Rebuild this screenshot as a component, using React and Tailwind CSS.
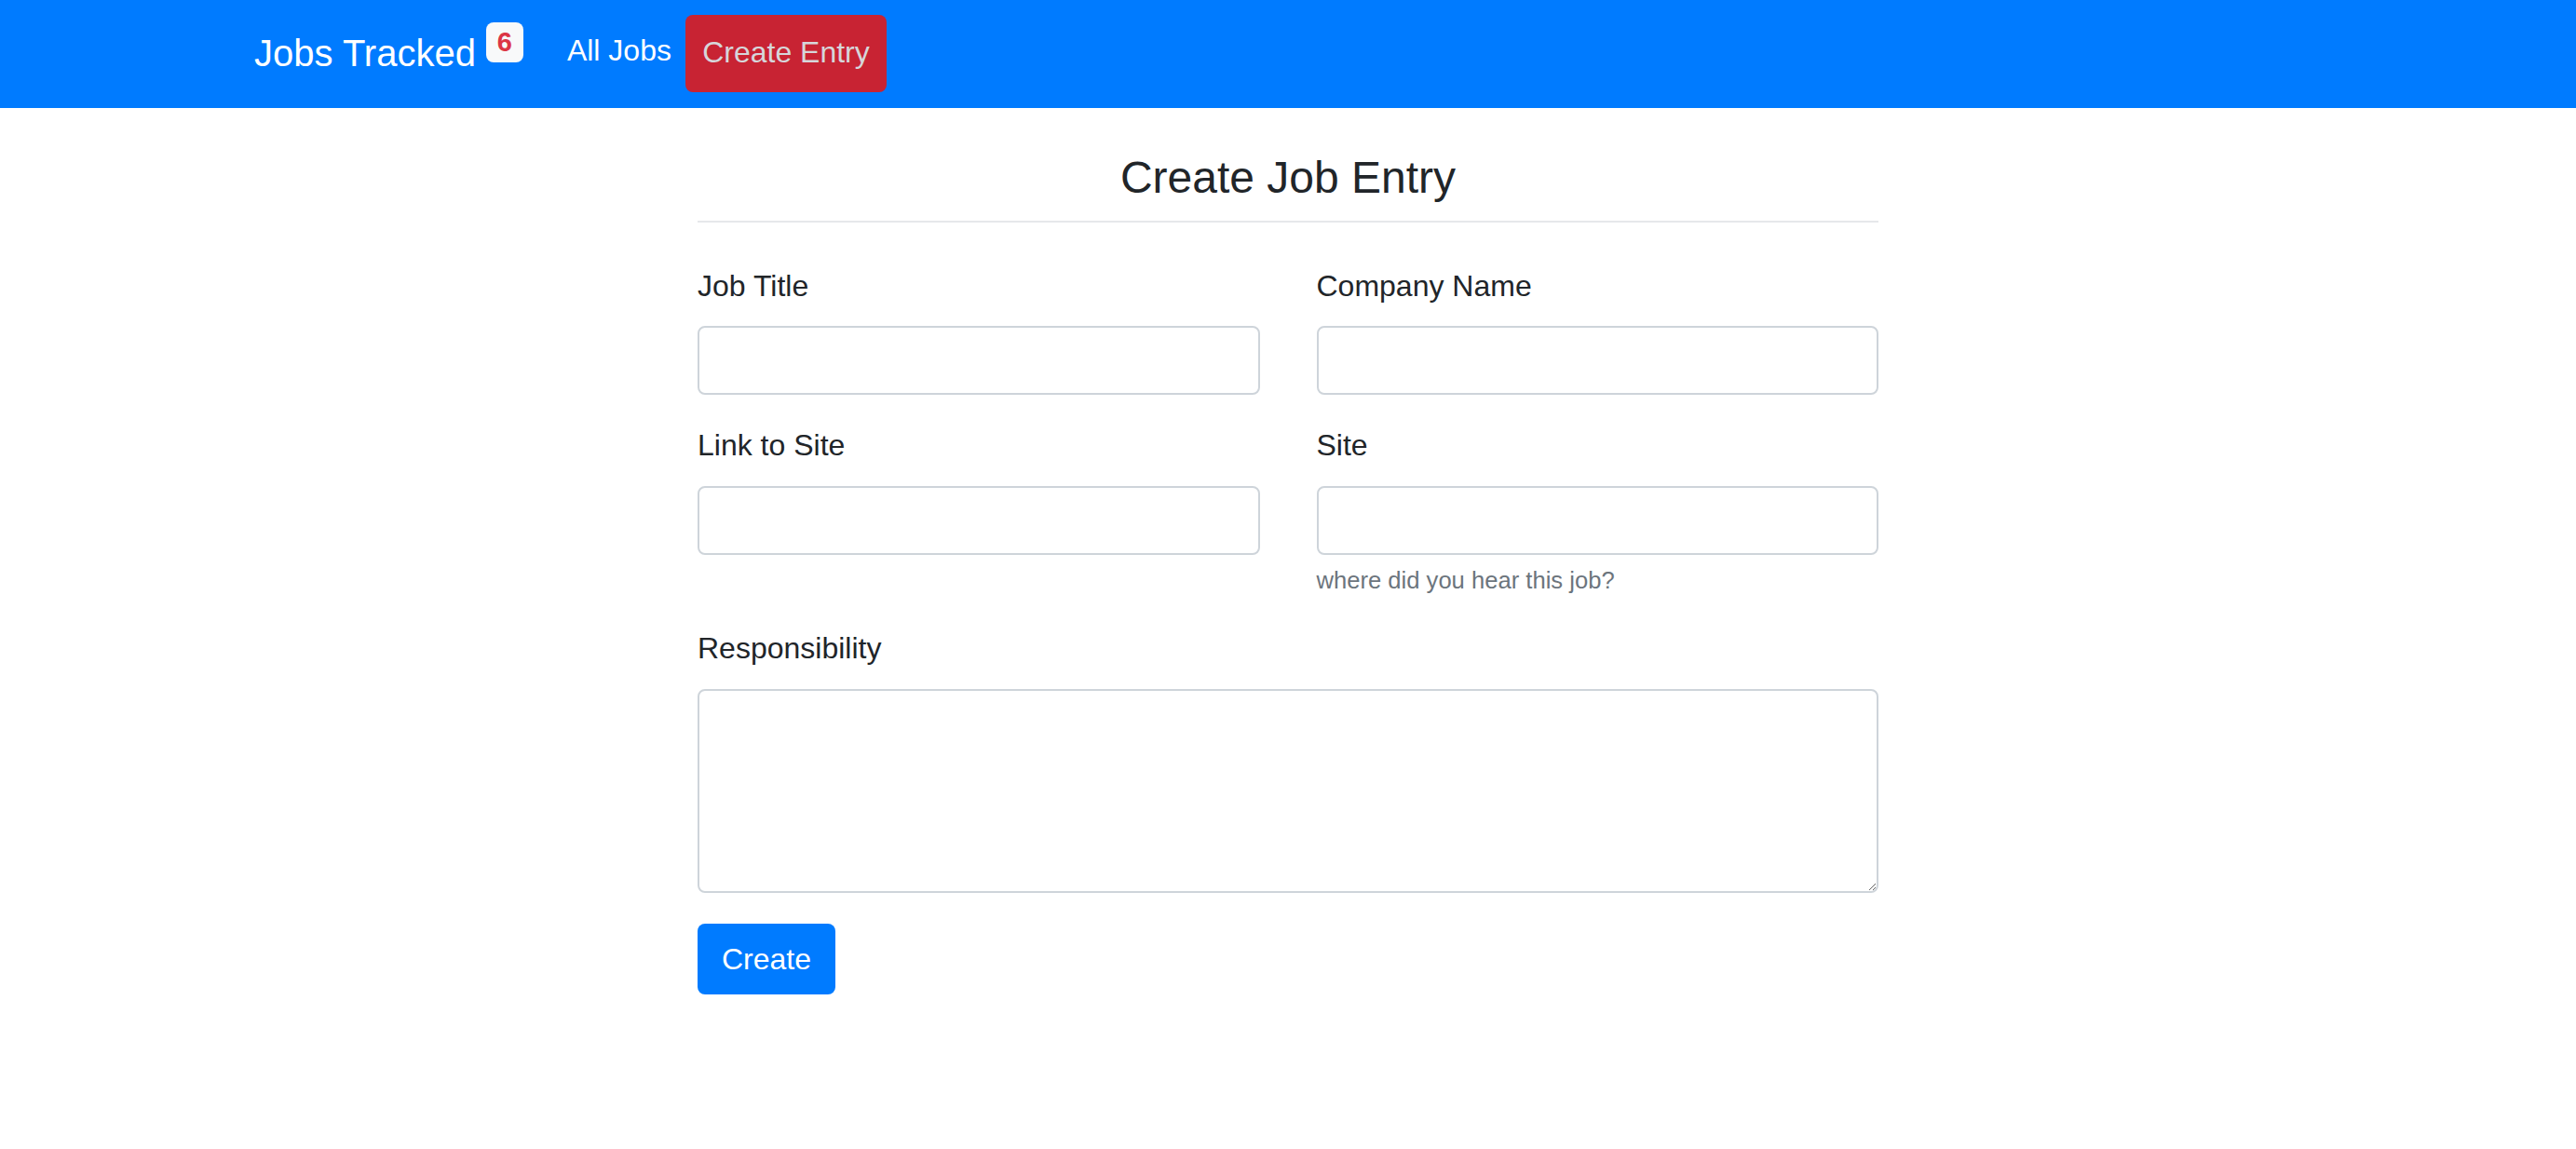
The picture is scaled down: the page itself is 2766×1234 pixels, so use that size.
import React from 'react'

function Field({ label, help, children }) {
  return (
    <div className="flex flex-col">
      <label className="block text-[32px] leading-[46.5px] mb-[20px] text-[#212529]">{label}</label>
      {children}
      {help && <small className="block mt-[9px] text-[25.6px] leading-[37.5px] text-[#6c757d]">{help}</small>}
    </div>
  )
}

const inputCls = 'w-full h-[74px] border-2 border-[#ced4da] rounded-[8px] bg-white px-[24px] text-[32px] outline-none'

export default function App() {
  return (
    <div className="min-h-screen bg-white font-['Liberation_Sans',Arial,sans-serif] text-[#212529]">
      {/* navbar */}
      <nav className="flex items-start h-[116px] bg-[#007bff] pl-[273px]">
        <span className="mt-[37px] text-[40px] leading-[40px] text-white">Jobs Tracked</span>
        <span className="ml-[11px] mt-[24px] w-[40px] h-[43px] rounded-[8px] bg-[#f8f9fa] text-[#dc3545] font-bold text-[29px] flex items-center justify-center">6</span>
        <a className="ml-[47px] mt-[38px] text-[32px] leading-[32px] text-white">All Jobs</a>
        <a className="ml-[15px] mt-[16px] w-[216px] h-[83px] rounded-[8px] bg-[#c82333] text-[#d6d6da] text-[32px] flex items-center justify-center pb-[4px]">Create Entry</a>
      </nav>

      <main className="mx-auto w-[1268px]">
        <h4 className="mt-[46px] text-center text-[48px] leading-[57.6px] text-[#212529]">Create Job Entry</h4>
        <div className="mt-[17px] h-[2px] bg-[#e6e8eb]" />

        <form className="mt-[45px]">
          <div className="grid grid-cols-2 gap-x-[61px] gap-y-[31px] items-start">
            <Field label="Job Title">
              <input className={inputCls} />
            </Field>
            <Field label="Company Name">
              <input className={inputCls} />
            </Field>
            <Field label="Link to Site">
              <input className={inputCls} />
            </Field>
            <Field label="Site" help="where did you hear this job?">
              <input className={inputCls} />
            </Field>
          </div>

          <div className="mt-[31px]">
            <Field label="Responsibility">
              <textarea className="w-full h-[219px] border-2 border-[#ced4da] rounded-[8px] bg-white px-[24px] py-[12px] text-[32px] outline-none block" />
            </Field>
          </div>

          <button type="button" className="mt-[33px] w-[148px] h-[76px] rounded-[8px] bg-[#007bff] text-white text-[32px] flex items-center justify-center">
            Create
          </button>
        </form>
      </main>
    </div>
  )
}
